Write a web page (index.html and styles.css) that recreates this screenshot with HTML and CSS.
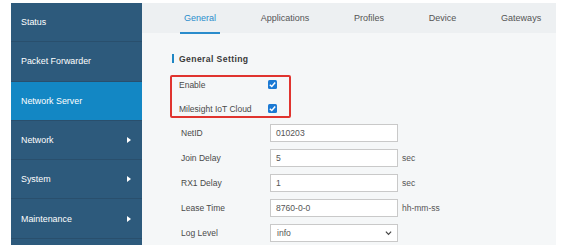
FILE: index.html
```html
<!DOCTYPE html>
<html lang="en">

<head>
  <meta charset="UTF-8">
  <title>Network Server - General</title>
  <link rel="stylesheet" href="styles.css">
</head>

<body>
  <div class="page">
    <ul class="sidebar">
      <li class="nav-item">Status</li>
      <li class="nav-item">Packet Forwarder</li>
      <li class="nav-item active">Network Server</li>
      <li class="nav-item has-sub">Network <span class="caret"></span></li>
      <li class="nav-item has-sub">System <span class="caret"></span></li>
      <li class="nav-item has-sub">Maintenance <span class="caret"></span></li>
    </ul>

    <div class="main">
      <div class="tabs">
        <div class="tab active">General</div>
        <div class="tab">Applications</div>
        <div class="tab">Profiles</div>
        <div class="tab">Device</div>
        <div class="tab">Gateways</div>
      </div>

      <div class="content">
        <div class="section-title">General Setting</div>

        <div class="highlight">
          <div class="check-row">
            <span class="label">Enable</span>
            <span class="checkbox"><svg viewBox="0 0 10 10"><path d="M2 5.2 L4.2 7.3 L8 2.8" /></svg></span>
          </div>
          <div class="check-row">
            <span class="label">Milesight IoT Cloud</span>
            <span class="checkbox"><svg viewBox="0 0 10 10"><path d="M2 5.2 L4.2 7.3 L8 2.8" /></svg></span>
          </div>
        </div>

        <div class="form">
          <div class="form-row">
            <span class="label">NetID</span>
            <div class="field">010203</div>
          </div>
          <div class="form-row">
            <span class="label">Join Delay</span>
            <div class="field">5</div>
            <span class="unit">sec</span>
          </div>
          <div class="form-row">
            <span class="label">RX1 Delay</span>
            <div class="field">1</div>
            <span class="unit">sec</span>
          </div>
          <div class="form-row">
            <span class="label">Lease Time</span>
            <div class="field">8760-0-0</div>
            <span class="unit">hh-mm-ss</span>
          </div>
          <div class="form-row">
            <span class="label">Log Level</span>
            <div class="field select">
              <span>info</span>
              <svg class="chevron" viewBox="0 0 8 6"><path d="M1 1.5 L4 4.5 L7 1.5" /></svg>
            </div>
          </div>
        </div>
      </div>
    </div>
  </div>
</body>

</html>
```

FILE: styles.css
```css
body {
  margin: 0;
  font-family: "Liberation Sans", Arial, sans-serif;
  background: #fff;
}

.page {
  display: flex;
  padding: 3px 12px 0 11px;
}

/* left menu */
.sidebar {
  list-style: none;
  margin: 0;
  padding: 0;
  width: 131px;
  height: 242px;
  background: #2d5a7c;
}

.nav-item {
  display: flex;
  align-items: center;
  justify-content: space-between;
  height: 38.3px;
  padding: 0 11px 0 10px;
  border-bottom: 1px solid #294f6d;
  color: #fff;
  font-size: 8.9px;
}

.nav-item.active {
  background: #1387c4;
}

.caret {
  width: 0;
  height: 0;
  border-top: 3.5px solid transparent;
  border-bottom: 3.5px solid transparent;
  border-left: 4px solid #fff;
}

/* right panel */
.main {
  width: 414px;
  height: 242px;
  background: #f5f7f8;
}

.tabs {
  display: flex;
  height: 30px;
  padding-left: 19.5px;
  background: #edf0f2;
}

.tab {
  position: relative;
  display: flex;
  align-items: center;
  padding: 0 22.4px;
  font-size: 9px;
  color: #555;
}

.tab.active {
  color: #2a8ccc;
}

.tab.active::after {
  content: "";
  position: absolute;
  left: 18.5px;
  right: 18.5px;
  bottom: -1px;
  height: 2px;
  background: #2a8ccc;
}

.content {
  padding: 21px 0 0 30px;
}

.section-title {
  display: flex;
  align-items: center;
  height: 9px;
  padding-left: 5px;
  border-left: 2px solid #1f87c4;
  font-size: 8.6px;
  font-weight: bold;
  letter-spacing: 0.4px;
  color: #3a3a3a;
}

.highlight {
  display: flex;
  flex-direction: column;
  gap: 9px;
  width: 103px;
  height: 39px;
  margin: 12px 0 0 -2px;
  padding: 0 7px;
  border: 2px solid #e0342f;
  border-radius: 2px;
}

.check-row {
  display: flex;
  align-items: center;
  height: 15px;
}

.label {
  width: 89px;
  flex: none;
  font-size: 8.5px;
  color: #4a4a4a;
}

.checkbox {
  display: flex;
  width: 9px;
  height: 9px;
  border-radius: 1.5px;
  background: #1c7ad4;
}

.checkbox svg {
  width: 9px;
  height: 9px;
  fill: none;
  stroke: #fff;
  stroke-width: 1.6;
}

.form {
  display: flex;
  flex-direction: column;
  gap: 7px;
  margin-top: 6px;
  padding-left: 9px;
}

.form-row {
  display: flex;
  align-items: center;
  height: 18px;
}

.field {
  display: flex;
  align-items: center;
  box-sizing: border-box;
  width: 128px;
  height: 18px;
  padding: 0 5px;
  border: 1px solid #c9c9c9;
  background: #fff;
  font-size: 8.6px;
  color: #555;
}

.field.select {
  justify-content: space-between;
  padding: 0 5px 0 6px;
}

.chevron {
  width: 7px;
  height: 6px;
  fill: none;
  stroke: #444;
  stroke-width: 1.4;
}

.unit {
  margin-left: 4px;
  font-size: 8.5px;
  color: #555;
}
```
